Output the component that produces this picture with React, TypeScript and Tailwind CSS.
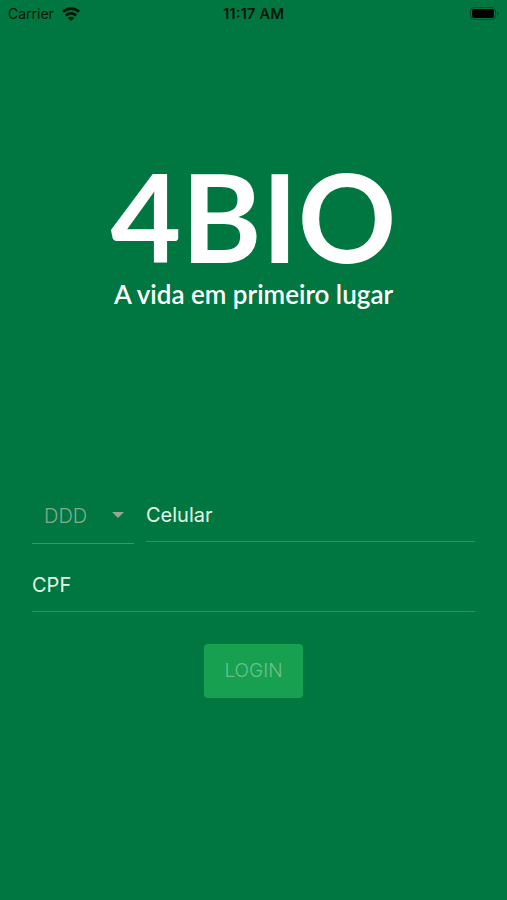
import { useState } from 'react';
import type { FormEvent } from 'react';

const areaCodes = ['11', '21', '31', '41', '51', '61', '71', '81'];

function StatusBar() {
  return (
    <header className="grid grid-cols-3 items-center h-7 pl-2 pr-2 font-['Inter',sans-serif] text-sm text-[#03180b]">
      <div className="flex items-center gap-2">
        <span>Carrier</span>
        <svg width="18" height="14" viewBox="0 0 18 14" fill="none" stroke="currentColor" strokeWidth="2.8" aria-hidden="true">
          <path d="M1 4.800C5.400 0.500 12.600 0.500 17 4.800" />
          <path d="M3.900 8.400C6.700 5.700 11.300 5.700 14.100 8.400" />
          <path d="M9 14L5.800 10.900C7.500 9.300 10.500 9.300 12.200 10.900Z" fill="currentColor" stroke="none" />
        </svg>
      </div>
      <span className="text-center text-[15px] font-semibold">11:17 AM</span>
      <svg className="justify-self-end" width="29" height="14" viewBox="0 0 29 14" aria-hidden="true">
        <rect x="0.5" y="0.5" width="25" height="12" rx="3.5" fill="none" stroke="#03180b" strokeOpacity="0.45" />
        <rect x="2" y="2" width="22" height="9" rx="2" fill="#000" />
        <path d="M27 4.500v4c1-0.300 1.600-1.100 1.600-2S28 4.800 27 4.500z" fill="#03180b" fillOpacity="0.45" />
      </svg>
    </header>
  );
}

function Logo() {
  return (
    <div className="flex flex-col items-center pt-32 font-['Lato',sans-serif] text-white whitespace-nowrap">
      <h1 className="text-[122px] leading-[120px] font-bold">4BIO</h1>
      <p className="text-[26px] leading-9 font-semibold">A vida em primeiro lugar</p>
    </div>
  );
}

export default function App() {
  const [ddd, setDdd] = useState('');
  const [phone, setPhone] = useState('');
  const [cpf, setCpf] = useState('');

  const canSubmit = ddd !== '' && phone !== '' && cpf !== '';

  const handleSubmit = (e: FormEvent) => {
    e.preventDefault();
  };

  return (
    <div className="min-h-screen bg-[#007740]">
      <StatusBar />
      <main>
        <Logo />
        <form onSubmit={handleSubmit} className="px-8 pt-44 font-['Inter',sans-serif] text-xl">
          <div className="flex items-start gap-3">
            <div className="relative w-[102px] shrink-0">
              <select
                aria-label="DDD"
                value={ddd}
                onChange={(e) => setDdd(e.target.value)}
                className="w-full h-14 pl-3 appearance-none bg-transparent border-b border-[#3d9469] font-light text-[#86aa90] focus:outline-none"
              >
                <option value="">DDD</option>
                {areaCodes.map((code) => (
                  <option key={code} value={code}>{code}</option>
                ))}
              </select>
              <svg className="absolute right-2.5 top-6 pointer-events-none" width="12" height="6" viewBox="0 0 12 6" fill="#94a896" aria-hidden="true">
                <path d="M0 0h12L6 6z" />
              </svg>
            </div>
            <input
              type="tel"
              aria-label="Celular"
              placeholder="Celular"
              value={phone}
              onChange={(e) => setPhone(e.target.value)}
              className="flex-1 min-w-0 h-[54px] bg-transparent border-b border-[#358f62] text-[#e2f8e6] placeholder:text-[#e2f8e6] focus:outline-none"
            />
          </div>
          <input
            type="text"
            aria-label="CPF"
            placeholder="CPF"
            value={cpf}
            onChange={(e) => setCpf(e.target.value)}
            className="block w-full h-[54px] mt-3.5 bg-transparent border-b border-[#358f62] text-[#e2f8e6] placeholder:text-[#e2f8e6] focus:outline-none"
          />
          <button
            type="submit"
            disabled={!canSubmit}
            className="block mx-auto mt-8 px-5 h-[54px] rounded bg-[#17a050] text-[19px] font-light text-[#6cc08d]"
          >
            LOGIN
          </button>
        </form>
      </main>
    </div>
  );
}
